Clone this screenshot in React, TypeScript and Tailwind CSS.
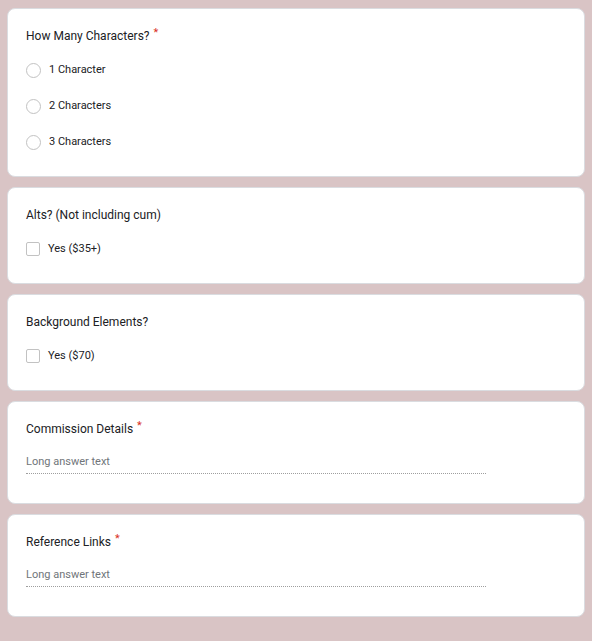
import React from 'react';

const font = { fontFamily: 'Roboto, "Liberation Sans", Arial, sans-serif' };

function Title({ text, required }: { text: string; required?: boolean }) {
  return (
    <div className="flex items-start h-[18px] text-[12px] leading-[18px] text-[#202124]">
      <span>{text}</span>
      {required && <span className="ml-[4px] text-[#d93025] text-[11px] leading-[12px]">*</span>}
    </div>
  );
}

function Radio({ label }: { label: string }) {
  return (
    <div className="flex items-center h-[36px]">
      <div className="w-[15px] h-[15px] rounded-full border border-[#c2c2c2] bg-white" />
      <span className="ml-[8px] text-[11px] text-[#202124]">{label}</span>
    </div>
  );
}

function Check({ label }: { label: string }) {
  return (
    <div className="flex items-center h-[36px]">
      <div className="w-[14px] h-[14px] rounded-[2px] border border-[#c2c2c2] bg-white" />
      <span className="ml-[8px] text-[11px] text-[#202124]">{label}</span>
    </div>
  );
}

function LongAnswer() {
  return (
    <div className="mt-[15px] w-[460px] border-b border-dotted border-[#9e9e9e] pb-[2px]">
      <div className="h-[18px] text-[11px] leading-[18px] text-[#70757a]">Long answer text</div>
    </div>
  );
}

function Card({ children, className = '' }: { children: React.ReactNode; className?: string }) {
  return (
    <div className={`bg-white rounded-[8px] border border-[#dadce0] px-[18px] pt-[18px] ${className}`}>
      {children}
    </div>
  );
}

export default function App() {
  return (
    <div style={font} className="min-h-[641px] bg-[#d9c4c5] pl-[7px] pr-[7px] pt-[8px] pb-[24px] flex flex-col gap-[10px]">
      <Card className="pb-[16px]">
        <Title text="How Many Characters?" required />
        <div className="mt-[7px]">
          <Radio label="1 Character" />
          <Radio label="2 Characters" />
          <Radio label="3 Characters" />
        </div>
      </Card>
      <Card className="pb-[16px]">
        <Title text="Alts? (Not including cum)" />
        <div className="mt-[7px]">
          <Check label="Yes ($35+)" />
        </div>
      </Card>
      <Card className="pb-[16px]">
        <Title text="Background Elements?" />
        <div className="mt-[7px]">
          <Check label="Yes ($70)" />
        </div>
      </Card>
      <Card className="pb-[29px]">
        <Title text="Commission Details" required />
        <LongAnswer />
      </Card>
      <Card className="pb-[29px]">
        <Title text="Reference Links" required />
        <LongAnswer />
      </Card>
    </div>
  );
}
